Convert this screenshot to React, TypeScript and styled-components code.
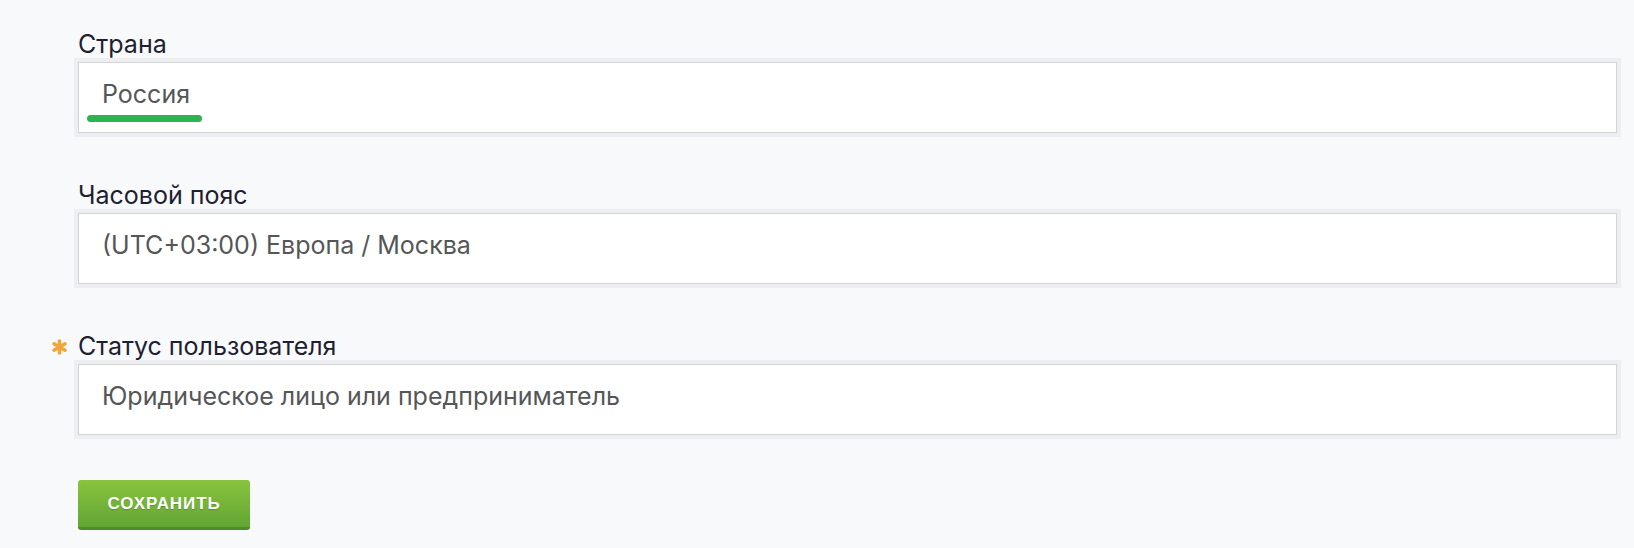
import React from "react";
import styled, { createGlobalStyle } from "styled-components";

const GlobalStyle = createGlobalStyle`
  body {
    margin: 0;
    background-color: #f8f9fb;
    font-family: Inter, "Noto Sans", sans-serif;
  }
`;

const fields = [
  { label: "Страна", value: "Россия", marked: true, required: false },
  { label: "Часовой пояс", value: "(UTC+03:00) Европа / Москва", marked: false, required: false },
  { label: "Статус пользователя", value: "Юридическое лицо или предприниматель", marked: false, required: true },
];

const Star = () => (
  <svg width="17" height="16" viewBox="0 0 17 16">
    <g stroke="#f3a43a" strokeWidth="3.6" strokeLinecap="round">
      <line x1="8.5" y1="2" x2="8.5" y2="14" />
      <line x1="3" y1="4.8" x2="14" y2="11.2" />
      <line x1="3" y1="11.2" x2="14" y2="4.8" />
    </g>
  </svg>
);

const App = () => {
  return (
    <>
      <GlobalStyle />
      <Page>
        {fields.map((f) => (
          <Field key={f.label}>
            <Label>
              {f.required && (
                <Required>
                  <Star />
                </Required>
              )}
              {f.label}
            </Label>
            <Input>
              {f.value}
              {f.marked && <Marker />}
            </Input>
          </Field>
        ))}
        <SaveButton>Сохранить</SaveButton>
      </Page>
    </>
  );
};

export default App;

const Page = styled.div`
  width: 1539px;
  padding: 29px 0 0 78px;
  display: flex;
  flex-direction: column;
  gap: 47px;
`;

const Field = styled.div`
  display: flex;
  flex-direction: column;
  gap: 3px;
`;

const Label = styled.div`
  position: relative;
  font-size: 25px;
  line-height: 30px;
  color: #1d2030;
`;

const Required = styled.span`
  position: absolute;
  left: -27px;
  top: 8px;
  display: flex;
`;

const Input = styled.div`
  position: relative;
  height: 71px;
  box-sizing: border-box;
  padding: 16px 23px;
  font-size: 25px;
  line-height: 30px;
  color: #555658;
  background: #fff;
  border: 1px solid #d3d4d6;
  box-shadow: 0 0 0 4px #eceef1;
`;

const Marker = styled.span`
  position: absolute;
  left: 8px;
  top: 52px;
  width: 115px;
  height: 7px;
  border-radius: 4px;
  background: #2bb450;
`;

const SaveButton = styled.button`
  align-self: flex-start;
  width: 172px;
  height: 50px;
  margin-top: -2px;
  border: none;
  border-radius: 3px;
  border-bottom: 3px solid #4c8f28;
  background: linear-gradient(#89c43f, #62a534);
  color: #fff;
  font-family: "Liberation Sans", Arial, sans-serif;
  font-weight: 700;
  font-size: 17px;
  letter-spacing: 0.9px;
  text-transform: uppercase;
  text-shadow: 0 1px 1px rgba(0, 0, 0, 0.2);
  cursor: pointer;
`;
